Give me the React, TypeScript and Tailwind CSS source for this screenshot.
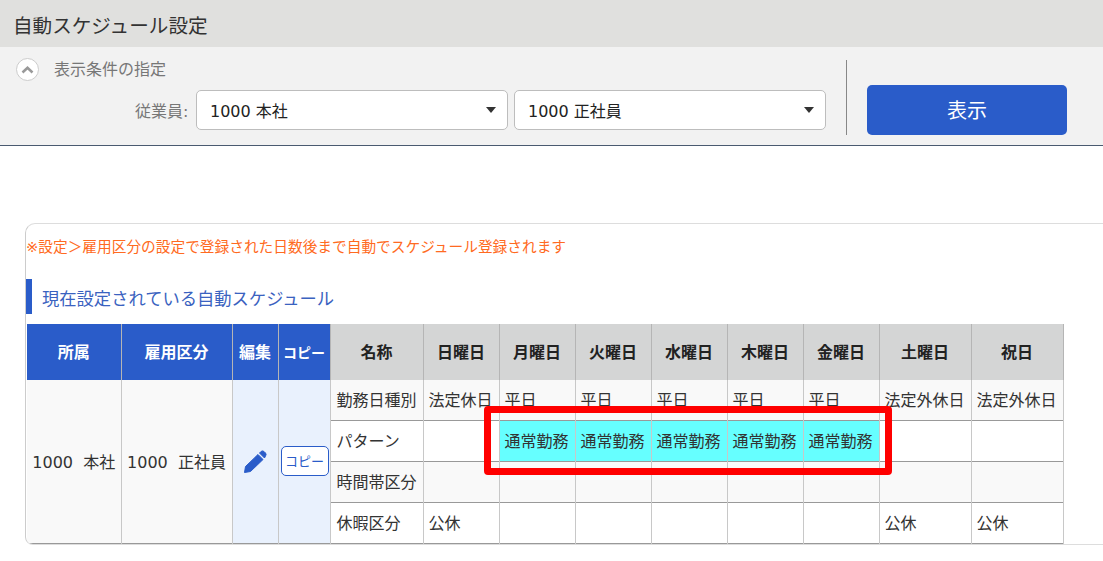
import React from "react";

const days = ["日曜日", "月曜日", "火曜日", "水曜日", "木曜日", "金曜日", "土曜日", "祝日"];

const rows = [
  { name: "勤務日種別", bg: "bg-[#f9f9f9]", h: "h-[40px]", cells: ["法定休日", "平日", "平日", "平日", "平日", "平日", "法定外休日", "法定外休日"] },
  { name: "パターン", bg: "bg-white", h: "h-[41px]", cells: ["", "通常勤務", "通常勤務", "通常勤務", "通常勤務", "通常勤務", "", ""] },
  { name: "時間帯区分", bg: "bg-[#f9f9f9]", h: "h-[41px]", cells: ["", "", "", "", "", "", "", ""] },
  { name: "休暇区分", bg: "bg-white", h: "h-[41px]", cells: ["公休", "", "", "", "", "", "公休", "公休"] },
];

function Select({ label }: { label: string }) {
  return (
    <div className="flex h-10 w-[312px] items-center justify-between rounded-[5px] border border-[#bdbdbd] bg-white pl-[13px] pr-[11px] text-base text-[#222]">
      <span className="pt-[4px]">{label}</span>
      <span className="h-0 w-0 border-x-[5px] border-t-[6px] border-x-transparent border-t-[#333]" />
    </div>
  );
}

function PencilIcon() {
  return (
    <svg width="25" height="25" viewBox="0 0 25 25" fill="#2a5cc9" stroke="#2a5cc9" strokeWidth="1" strokeLinejoin="round" className="mx-auto">
      <path d="M2.5 17.5 L15 5.5 L20 10.5 L7.5 22.5 L1.5 23.5 Z" />
      <path d="M16.5 4 L18 2.5 Q19.5 1.3 21 2.5 L22.5 4 Q23.7 5.5 22.5 7 L21.5 9 Z" />
    </svg>
  );
}

export default function App() {
  return (
    <div
      className="relative h-[561px] w-[1103px] overflow-hidden bg-white"
      style={{ fontFamily: '"DejaVu Sans", "Noto Sans CJK JP", sans-serif' }}
    >
      <div className="flex h-[47px] items-center bg-[#e0e0de] pl-[13px] pt-[6px] text-[19.6px] text-[#333]">自動スケジュール設定</div>

      <div className="flex h-[99px] border-b border-[#4a5a70] bg-[#f2f2f2]">
        <div className="w-[846px] shrink-0">
          <div className="flex h-[43px] items-center pl-4 pt-[2px]">
            <span className="flex h-[23px] w-[23px] items-center justify-center rounded-full border border-[#ccc] bg-white">
              <svg width="13" height="8" viewBox="0 0 13 8" fill="none" stroke="#999" strokeWidth="2.6">
                <path d="M1.5 6.5 L6.5 1.8 L11.5 6.5" />
              </svg>
            </span>
            <span className="ml-[15px] text-base text-[#777]">表示条件の指定</span>
          </div>
          <div className="flex items-center gap-[6px] pl-[135px]">
            <span className="w-[55px] pt-[4px] text-base text-[#777]">従業員:</span>
            <Select label="1000 本社" />
            <Select label="1000 正社員" />
          </div>
        </div>
        <div className="mt-[13px] flex h-[75px] items-start border-l border-[#888] pl-5 pt-[25px]">
          <button className="h-[50px] w-[200px] rounded-[5px] bg-[#2a5cc9] pt-[2px] text-xl text-white">表示</button>
        </div>
      </div>

      <div className="ml-[25px] mt-[77px] h-[322px] overflow-hidden rounded-tl-[10px] rounded-bl-[8px] border-b border-l border-t border-[#ddd] border-l-[#ccc]">
        <div className="flex h-[55px] items-start pt-[12px] text-[14.7px] leading-[22px] text-[#ff6a21]">※設定＞雇用区分の設定で登録された日数後まで自動でスケジュール登録されます</div>
        <div className="flex h-[35px] items-center border-l-[6px] border-[#2a5cc9] pl-[10px] pt-[6px] text-[17.3px] text-[#3a62c0]">現在設定されている自動スケジュール</div>

        <table className="ml-px mt-[10px] table-fixed border-collapse text-base text-[#333]">
          <colgroup>
            <col className="w-[94px]" />
            <col className="w-[111px]" />
            <col className="w-[46px]" />
            <col className="w-[52px]" />
            <col className="w-[93px]" />
            <col className="w-[76px]" />
            <col className="w-[76px]" />
            <col className="w-[76px]" />
            <col className="w-[76px]" />
            <col className="w-[76px]" />
            <col className="w-[76px]" />
            <col className="w-[92px]" />
            <col className="w-[92px]" />
          </colgroup>
          <thead>
            <tr className="h-[56px] font-bold">
              {["所属", "雇用区分", "編集"].map((h) => (
                <th key={h} className="border-r border-[#b5b5b5] bg-[#2a5cc9] p-0 pt-[2px] text-white">
                  {h}
                </th>
              ))}
              <th className="border-r border-[#b5b5b5] bg-[#2a5cc9] p-0 pt-[2px] text-sm text-white">コピー</th>
              {["名称", ...days].map((h) => (
                <th key={h} className="border-r border-[#b5b5b5] bg-[#d4d5d5] p-0 pt-[2px] text-[#222]">
                  {h}
                </th>
              ))}
            </tr>
          </thead>
          <tbody>
            {rows.map((row, i) => (
              <tr key={row.name} className={`${row.h} border-b border-[#999]`}>
                {i === 0 && (
                  <>
                    <td rowSpan={4} className="whitespace-pre border-r border-[#c8c8c8] bg-[#f9f9f9] pt-[3px] text-center">
                      1000  本社
                    </td>
                    <td rowSpan={4} className="whitespace-pre border-r border-[#c8c8c8] bg-[#f9f9f9] pt-[3px] text-center">
                      1000  正社員
                    </td>
                    <td rowSpan={4} className="border-r border-[#c8c8c8] bg-[#e9f1fd] pl-[1px] text-center">
                      <PencilIcon />
                    </td>
                    <td rowSpan={4} className="border-r border-[#c8c8c8] bg-[#e9f1fd] pl-[1px] text-center">
                      <button className="h-[30px] w-[48px] rounded-[5px] border border-[#2a5cc9] bg-white text-[13px] text-[#2a5cc9]">コピー</button>
                    </td>
                  </>
                )}
                <td className={`border-r border-[#c8c8c8] pl-[6px] pt-[2px] ${row.bg}`}>{row.name}</td>
                {row.cells.map((c, j) => (
                  <td
                    key={j}
                    className={`whitespace-nowrap border-r border-[#c8c8c8] pl-[5px] pt-[2px] ${c === "通常勤務" ? "bg-[#66ffff]" : row.bg}`}
                  >
                    {c}
                  </td>
                ))}
              </tr>
            ))}
          </tbody>
        </table>
      </div>

      {/* red highlight drawn on top of the screenshot */}
      <div className="absolute left-[484px] top-[406px] h-[69px] w-[408px] rounded-[4px] border-[7px] border-[#ff0000]" />
    </div>
  );
}
